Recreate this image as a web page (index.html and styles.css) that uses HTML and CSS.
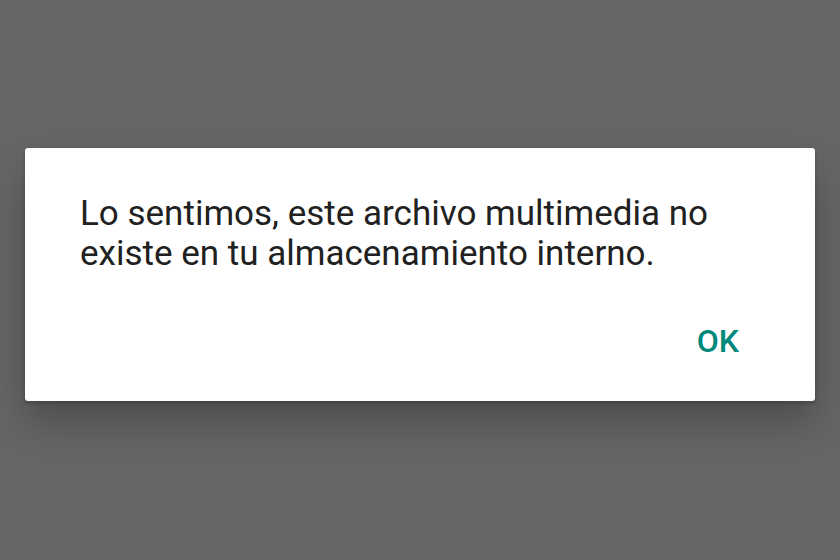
FILE: index.html
```html
<!DOCTYPE html>
<html lang="es">
<head>
    <meta charset="UTF-8">
    <meta name="viewport" content="width=device-width, initial-scale=1.0">
    <title>Archivo no encontrado</title>
    <link rel="stylesheet" href="styles.css">
</head>
<body>
    <div class="dialog">
        <p class="message">Lo sentimos, este archivo multimedia no existe en tu almacenamiento interno.</p>
        <div class="actions">
            <button class="ok">OK</button>
        </div>
    </div>
</body>
</html>
```

FILE: styles.css
```css
body {
    font-family: Roboto, "Noto Sans", sans-serif;
    background-color: #666;
    margin: 0;
    padding: 0;
    height: 100vh;
    overflow: hidden;
}

.dialog {
    box-sizing: border-box;
    width: 790px;
    height: 253px;
    margin: 148px 0 0 25px;
    padding: 46px 76px 40px 55px;
    background-color: #fff;
    border-radius: 3px;
    box-shadow: 0 22px 40px rgba(0, 0, 0, 0.25), 0 2px 4px rgba(0, 0, 0, 0.2);
    display: flex;
    flex-direction: column;
}

.message {
    margin: 0;
    font-size: 35px;
    line-height: 40px;
    color: #212121;
    max-width: 660px;
}

.actions {
    margin-top: auto;
    display: flex;
    justify-content: flex-end;
}

.ok {
    font-family: inherit;
    font-size: 32px;
    line-height: 40px;
    font-weight: 500;
    color: #00897b;
    background: none;
    border: none;
    padding: 0;
    cursor: pointer;
}
```
